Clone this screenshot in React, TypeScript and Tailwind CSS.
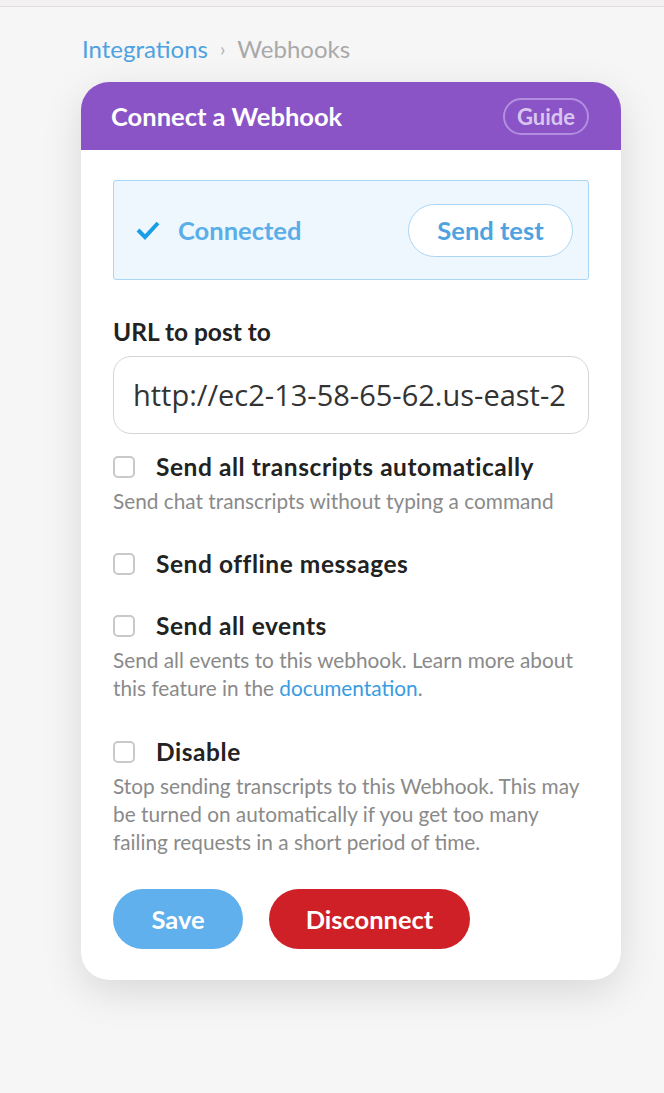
import React from "react";

function Check({ label }: { label: string }) {
  return (
    <div className="flex items-center gap-[21px] h-[28px]">
      <span className="w-[22px] h-[22px] rounded-[5px] border-2 border-[#c9c9c9] bg-white shrink-0" />
      <span className="text-[24.5px] font-bold text-[#222] leading-[28px] tracking-[0.55px]">{label}</span>
    </div>
  );
}

export default function App() {
  return (
    <div className="min-h-[1093px] bg-[#f6f6f6] font-['Lato',sans-serif]">
      <div className="h-[7px] bg-[#f3f1f2] border-b border-[#e2dedf]" />
      <div className="pl-[82px] pt-[27px] text-[24px] leading-[30px] flex items-center">
        <span className="text-[#4ea2e0]">Integrations</span>
        <span className="text-[#b0b0b0] mx-[12px] text-[19px]">›</span>
        <span className="text-[#a9a9a9]">Webhooks</span>
      </div>
      <div className="ml-[81px] mt-[18px] w-[540px] bg-white rounded-[28px] shadow-[0_12px_40px_rgba(0,0,0,0.12)] overflow-hidden">
        <div className="h-[68px] bg-[#8a54c6] flex items-center justify-between pl-[30px] pr-[32px]">
          <span className="text-white text-[25.5px] font-bold">Connect a Webhook</span>
          <span className="h-[37px] px-[12px] rounded-full border-2 border-[#b28ee0] text-[#d8c6f1] text-[22px] font-bold flex items-center">
            Guide
          </span>
        </div>
        <div className="px-[32px] pt-[30px] pb-[31px]">
          <div className="h-[100px] bg-[#eef6fe] border border-[#a9d6f7] rounded-[3px] flex items-center justify-between pl-[22px] pr-[15px]">
            <div className="flex items-center gap-[18px]">
              <svg width="24" height="20" viewBox="0 0 24 20">
                <path d="M2 10 L9 17 L22 3" fill="none" stroke="#1a9ee6" strokeWidth="4" strokeLinejoin="miter" />
              </svg>
              <span className="text-[#5aaee8] text-[25.5px] font-bold">Connected</span>
            </div>
            <span className="h-[53px] w-[165px] rounded-full bg-white border border-[#a9d6f7] flex items-center justify-center text-[#4ea2e0] text-[25.5px] font-bold">
              Send test
            </span>
          </div>
          <div className="mt-[37px] text-[24.5px] font-bold text-[#222] leading-[30px]">URL to post to</div>
          <div className="mt-[9px] h-[78px] rounded-[18px] border border-[#d9d4d4] flex items-center pl-[19px] overflow-hidden">
            <span className="text-[29px] text-[#333] whitespace-nowrap font-['Open_Sans',sans-serif]">
              http://ec2-13-58-65-62.us-east-2
            </span>
          </div>
          <div className="mt-[19px]">
            <Check label="Send all transcripts automatically" />
            <p className="mt-[6px] text-[20.8px] text-[#8a8a8a] leading-[28px]">Send chat transcripts without typing a command</p>
          </div>
          <div className="mt-[35px]">
            <Check label="Send offline messages" />
          </div>
          <div className="mt-[34px]">
            <Check label="Send all events" />
            <p className="mt-[6px] text-[20.8px] text-[#8a8a8a] leading-[28px]">
              Send all events to this webhook. Learn more about this feature in the{" "}
              <span className="text-[#3a9ce0]">documentation</span>.
            </p>
          </div>
          <div className="mt-[36px]">
            <Check label="Disable" />
            <p className="mt-[6px] text-[20.8px] text-[#8a8a8a] leading-[28px]">
              Stop sending transcripts to this Webhook. This may be turned on automatically if you get too many failing requests in a short period of time.
            </p>
          </div>
          <div className="mt-[33px] flex gap-[26px]">
            <span className="h-[60px] w-[130px] rounded-full bg-[#5fb0ec] text-white text-[25.5px] font-bold flex items-center justify-center">Save</span>
            <span className="h-[60px] w-[201px] rounded-full bg-[#cf2027] text-white text-[25.5px] font-bold flex items-center justify-center">Disconnect</span>
          </div>
        </div>
      </div>
    </div>
  );
}
